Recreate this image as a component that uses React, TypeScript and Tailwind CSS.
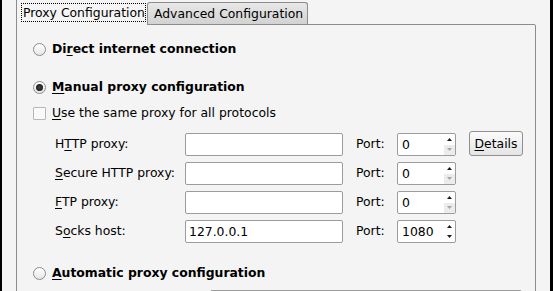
import type { ReactNode } from "react";

const Mn = ({ children }: { children: ReactNode }) => (
  <span className="underline decoration-1 underline-offset-[2px]">{children}</span>
);

const Radio = ({ checked = false }: { checked?: boolean }) => (
  <span className="w-[13px] h-[13px] shrink-0 rounded-full border border-[#8c8c8c] bg-gradient-to-b from-white to-[#e6e6e6] flex items-center justify-center">
    {checked && <span className="w-[7px] h-[7px] rounded-full bg-radial from-[#444] to-[#111]" />}
  </span>
);

const Arrow = ({ up, dim }: { up?: boolean; dim?: boolean }) => (
  <svg width="5" height="3" viewBox="0 0 5 3">
    <path d={up ? "M2.5 0L5 3H0z" : "M0 0H5L2.5 3z"} fill={dim ? "#a6a6a6" : "#1a1a1a"} />
  </svg>
);

const Spin = ({ value }: { value: string }) => {
  const atMin = value === "0";
  return (
    <div className="w-[59px] h-[23px] border border-[#9c9c9c] rounded-[2px] bg-white flex">
      <span className="flex-1 pl-[4px] leading-[21px]">{value}</span>
      <div className="w-[11px] flex flex-col">
        <div className="flex-1 flex items-center justify-center">
          <Arrow up />
        </div>
        <div className={atMin ? "flex-1 flex items-center justify-center bg-[#ececec]" : "flex-1 flex items-center justify-center"}>
          <Arrow dim={atMin} />
        </div>
      </div>
    </div>
  );
};

const Entry = ({ value = "" }: { value?: string }) => (
  <div className="w-[158px] h-[23px] border border-[#9c9c9c] rounded-[2px] bg-white pl-[3px] leading-[21px]">
    {value}
  </div>
);

const ProxyRow = ({ label, value, port, details }: { label: ReactNode; value?: string; port: string; details?: boolean }) => (
  <div className="flex items-center h-[23px] ml-[38px]">
    <span className="w-[130px]">{label}</span>
    <Entry value={value} />
    <span className="ml-[13px] w-[41px]">Port:</span>
    <Spin value={port} />
    {details && (
      <button className="ml-[13px] self-start -mt-[2px] w-[54px] h-[25px] border border-[#8f8f8f] rounded-[3px] bg-gradient-to-b from-[#fbfbfb] to-[#e4e4e4] leading-[23px] text-center">
        <Mn>D</Mn>etails
      </button>
    )}
  </div>
);

export default function App() {
  return (
    <div className="w-[553px] h-[291px] bg-black overflow-hidden font-['DejaVu_Sans',sans-serif] text-[12.4px] text-black">
      <div className="ml-[2px] w-[548px] h-full bg-[#f4f4f4] pl-[14px]">
        {/* tabs */}
        <div className="flex items-end h-[24px]">
          <div className="relative z-10 w-[131px] h-[25px] -mb-px border-l border-[#8c8c8c] bg-[#f4f4f4] self-start pl-[4px] pt-[3px]">
            <span className="block w-[125px] h-[19px] border border-dotted border-black pl-[1px] leading-[17px] whitespace-nowrap">
              Proxy Configuration
            </span>
          </div>
          <div className="w-[161px] h-[22px] border border-b-0 border-[#8c8c8c] rounded-t-[3px] bg-gradient-to-b from-[#e8e8e8] to-[#d2d2d2] pl-[6px] leading-[21px] whitespace-nowrap">
            Advanced Configuration
          </div>
        </div>

        {/* panel */}
        <div className="w-[520px] h-[300px] border border-[#8c8c8c] rounded-tr-[2px] pl-[16px]">
          <div className="mt-[15px] flex items-center h-[19px] gap-[6px] font-bold">
            <Radio />
            <span>
              Di<Mn>r</Mn>ect internet connection
            </span>
          </div>
          <div className="mt-[19px] flex items-center h-[19px] gap-[6px] font-bold">
            <Radio checked />
            <span>
              <Mn>M</Mn>anual proxy configuration
            </span>
          </div>
          <div className="mt-[7px] flex items-center h-[19px] gap-[6px]">
            <span className="w-[13px] h-[13px] shrink-0 border border-[#b8b8b8] rounded-[1px] bg-[#f9f9f9]" />
            <span>
              <Mn>U</Mn>se the same proxy for all protocols
            </span>
          </div>

          <div className="mt-[10px] flex flex-col gap-[6px] -ml-[16px]">
            <ProxyRow label={<>H<Mn>T</Mn>TP proxy:</>} port="0" details />
            <ProxyRow label={<><Mn>S</Mn>ecure HTTP proxy:</>} port="0" />
            <ProxyRow label={<><Mn>F</Mn>TP proxy:</>} port="0" />
            <ProxyRow label={<>S<Mn>o</Mn>cks host:</>} value="127.0.0.1" port="1080" />
          </div>

          <div className="mt-[21px] flex items-center h-[19px] gap-[6px] font-bold">
            <Radio />
            <span>
              <Mn>A</Mn>utomatic proxy configuration
            </span>
          </div>
          <div className="mt-[7px] ml-[177px] w-[312px] h-[23px] border border-[#9c9c9c] rounded-[2px] bg-white" />
        </div>
      </div>
    </div>
  );
}
